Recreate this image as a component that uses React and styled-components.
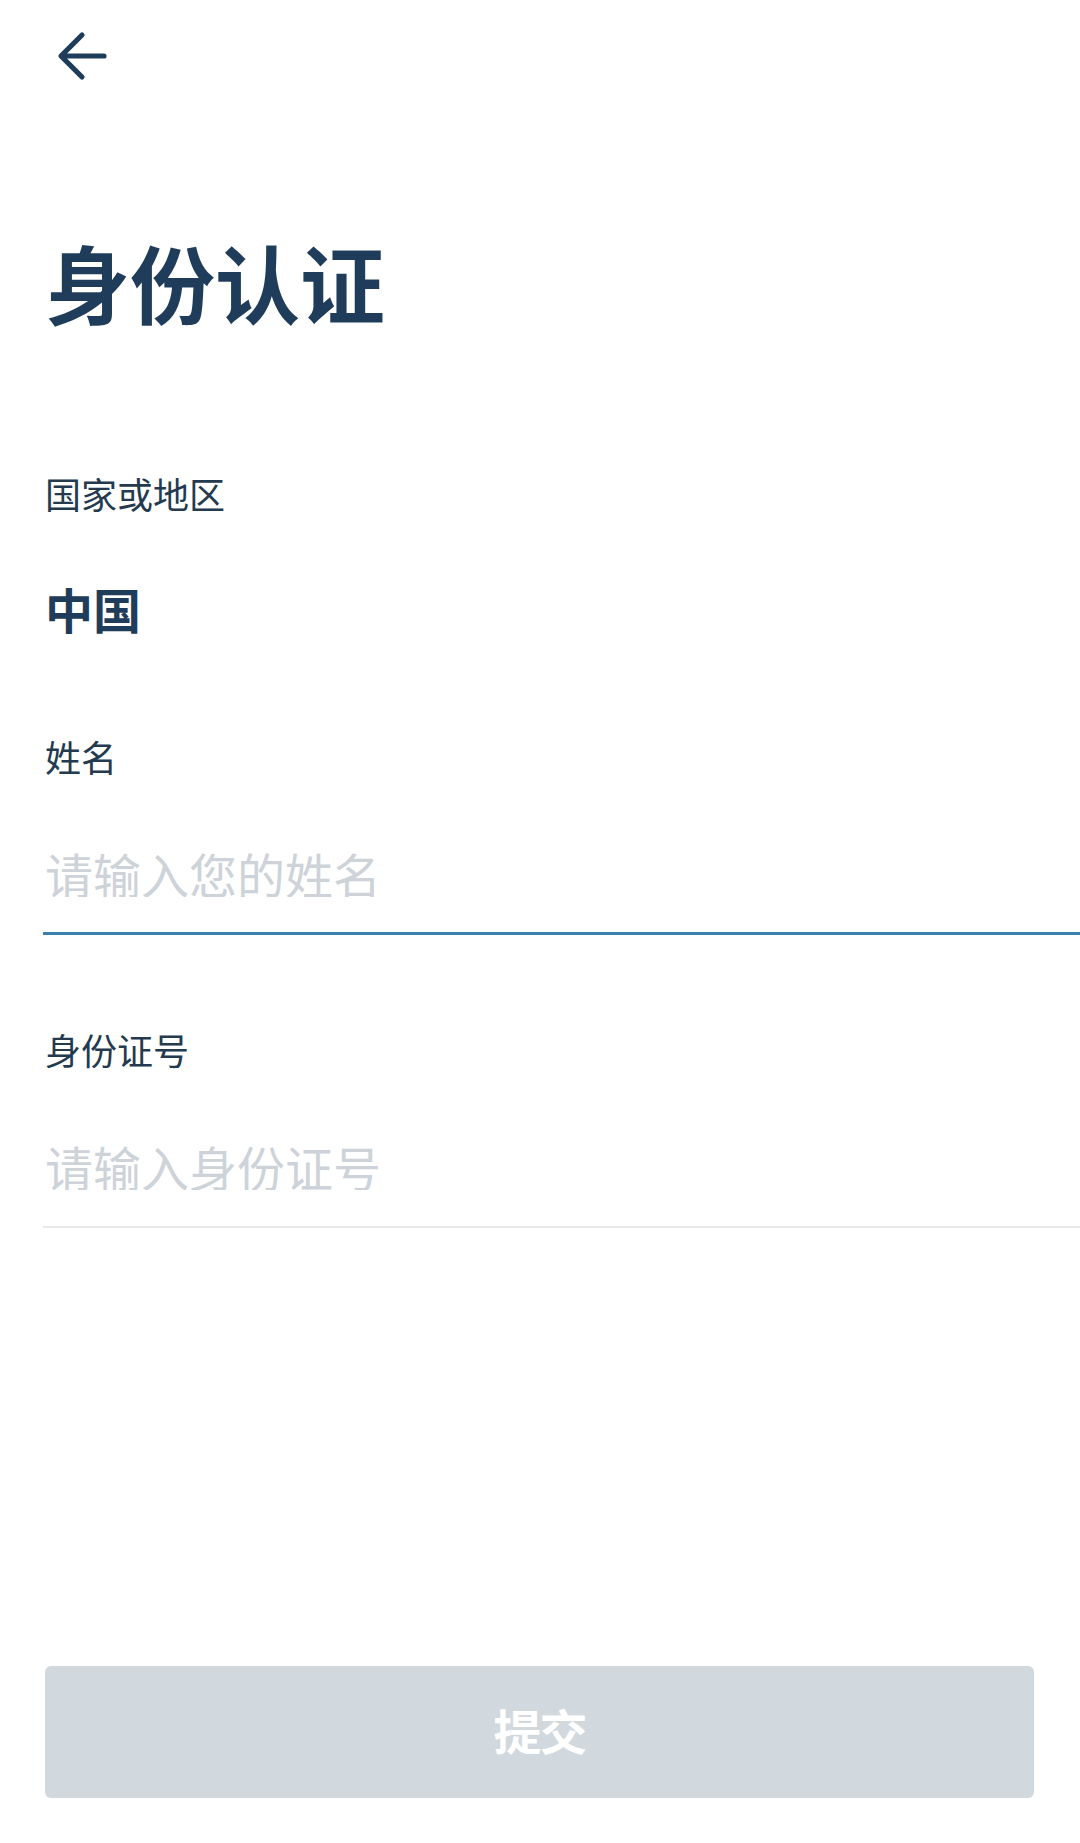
import React, { useState } from 'react';
import styled, { createGlobalStyle } from 'styled-components';

const GlobalStyle = createGlobalStyle`
    html, body {
        margin: 0;
        padding: 0;
        background: #ffffff;
    }
    body {
        font-family: "Noto Sans CJK SC", "Noto Sans", sans-serif;
    }
`

const Page = styled.div`
    min-height: 1843px;
    box-sizing: border-box;
    display: flex;
    flex-direction: column;
    padding: 30px 0 45px 0;
    background: #ffffff;
`

const BackButton = styled.button`
    width: 52px;
    height: 52px;
    margin-left: 56px;
    padding: 0;
    border: none;
    background: transparent;
    cursor: pointer;
    display: block;
`

const Title = styled.h1`
    margin: 156px 0 0 45px;
    font-size: 85px;
    line-height: 1;
    font-weight: 700;
    color: #1f3d5a;
`

const Label = styled.div`
    margin: ${(props) => props.gap}px 0 0 45px;
    font-size: 36px;
    line-height: 1;
    color: #233a4f;
`

const CountryValue = styled.div`
    margin: 73px 0 0 45px;
    font-size: 48px;
    line-height: 1;
    font-weight: 700;
    color: #1f3d5a;
`

const Field = styled.div`
    margin: 75px 0 0 43px;
    padding-bottom: ${(props) => (props.active ? 35 : 36)}px;
    border-bottom: ${(props) => (props.active ? '3px solid #3b80ad' : '2px solid #e7e9eb')};
`

const Input = styled.input`
    display: block;
    width: 100%;
    box-sizing: border-box;
    height: 48px;
    margin: 0;
    padding: 0 0 0 2px;
    border: none;
    outline: none;
    background: transparent;
    font-family: "Noto Sans CJK SC", "Noto Sans", sans-serif;
    font-size: 48px;
    line-height: 1;
    color: #1f3d5a;

    &::placeholder {
        color: #cdd3d9;
    }
`

const SubmitButton = styled.button`
    margin: auto 46px 0 45px;
    height: 132px;
    padding: 0 0 6px 0;
    border: none;
    border-radius: 6px;
    background: ${(props) => (props.disabled ? '#d1d8de' : '#3b80ad')};
    color: #ffffff;
    font-family: "Noto Sans CJK SC", "Noto Sans", sans-serif;
    font-size: 48px;
    font-weight: 700;
    letter-spacing: -2px;
    display: flex;
    align-items: center;
    justify-content: center;
`

function BackArrow() {
    return (
        <svg width="52" height="52" viewBox="0 0 52 52" fill="none">
            <path d="M48 26H6M26 5L5 26L26 47" stroke="#1f3d5a" strokeWidth="5.2" strokeLinecap="round" strokeLinejoin="round" />
        </svg>
    );
}

function App() {
    const [name, setName] = useState('');
    const [idNumber, setIdNumber] = useState('');

    return (
        <>
            <GlobalStyle />
            <Page>
                <BackButton aria-label="返回">
                    <BackArrow />
                </BackButton>
                <Title>身份认证</Title>

                <Label gap={152}>国家或地区</Label>
                <CountryValue>中国</CountryValue>

                <Label gap={106}>姓名</Label>
                <Field active>
                    <Input placeholder="请输入您的姓名" value={name} onChange={(e) => setName(e.target.value)} />
                </Field>

                <Label gap={96}>身份证号</Label>
                <Field>
                    <Input placeholder="请输入身份证号" value={idNumber} onChange={(e) => setIdNumber(e.target.value)} />
                </Field>

                <SubmitButton disabled={!name || !idNumber}>提交</SubmitButton>
            </Page>
        </>
    );
}

export default App;
